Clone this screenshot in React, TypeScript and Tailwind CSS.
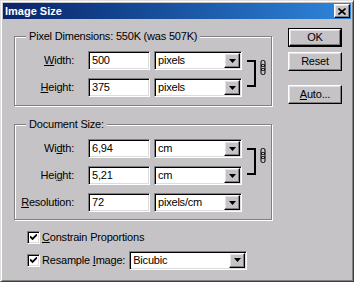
import type { ReactNode } from "react";

const sunken =
  "border border-t-[#808080] border-l-[#808080] border-b-white border-r-white shadow-[inset_1px_1px_0_#000,inset_-1px_-1px_0_#dcdcdc]";
const raised =
  "border border-t-white border-l-white border-b-black border-r-black shadow-[inset_-1px_-1px_0_#808080,inset_1px_1px_0_#e4e2e4]";
const etched =
  "border border-[#808080] shadow-[1px_1px_0_#fff,inset_1px_1px_0_#fff]";

function Arrow() {
  return (
    <svg width="7" height="4" viewBox="0 0 7 4">
      <path d="M0 0h7L3.5 4z" fill="#000" />
    </svg>
  );
}

function Combo({ value, className }: { value: string; className: string }) {
  return (
    <div className={`flex h-[19px] items-stretch bg-white p-[1px] ${sunken} ${className}`}>
      <span className="flex-1 pl-[2px] text-[11px] leading-[15px]">{value}</span>
      <span className={`flex w-[16px] items-center justify-center bg-[#c6c3c6] ${raised}`}>
        <Arrow />
      </span>
    </div>
  );
}

function Field({ label, value, unit }: { label: ReactNode; value: string; unit: string }) {
  return (
    <div className="flex h-[19px] items-center">
      <span className="w-[59px] text-right text-[11px]">{label}</span>
      <div className={`ml-[14px] h-[19px] w-[62px] bg-white px-[3px] text-[11px] leading-[16px] ${sunken}`}>
        {value}
      </div>
      <Combo value={unit} className="ml-[4px] w-[88px]" />
    </div>
  );
}

function Bracket({ top }: { top: string }) {
  return (
    <div className="ml-[5px] flex items-start">
      <div className={`${top} h-[27px] w-[9px] border-2 border-l-0 border-black`} />
      <svg className={`${top} ml-[4px] mt-[5px]`} width="6" height="15" viewBox="0 0 6 15">
        <rect x="1" y="0.5" width="4" height="6" rx="1.5" fill="none" stroke="#000" strokeWidth="1" />
        <rect x="1" y="4.5" width="4" height="6" rx="1.5" fill="none" stroke="#000" strokeWidth="1" />
        <rect x="1" y="8.5" width="4" height="6" rx="1.5" fill="none" stroke="#000" strokeWidth="1" />
      </svg>
    </div>
  );
}

function Check({ label }: { label: ReactNode }) {
  return (
    <div className="flex items-center">
      <span className={`flex h-[13px] w-[13px] items-center justify-center bg-white ${sunken}`}>
        <svg width="7" height="7" viewBox="0 0 7 7">
          <path d="M0 2.5l2.5 2.5L7 0.5" fill="none" stroke="#000" strokeWidth="1.8" />
        </svg>
      </span>
      <span className="ml-[2px] text-[11px]">{label}</span>
    </div>
  );
}

function Button({ children, isDefault }: { children: ReactNode; isDefault?: boolean }) {
  const inner = (
    <div className={`flex h-full w-full items-center justify-center bg-[#c6c3c6] text-[11px] ${raised}`}>
      {children}
    </div>
  );
  return (
    <div className={`h-[19px] w-[54px] ${isDefault ? "border border-black" : ""}`}>{inner}</div>
  );
}

export default function App() {
  return (
    <div className="flex h-[282px] w-[354px] flex-col border border-t-[#dfdfdf] border-l-[#dfdfdf] border-b-[#404040] border-r-[#404040] bg-[#c6c3c6] p-[2px] font-['Liberation_Sans',Arial,sans-serif] tracking-[-0.2px] text-black shadow-[inset_1px_1px_0_#fff,inset_-1px_-1px_0_#808080]">
      <div className="flex h-[16px] items-center justify-between bg-linear-to-r from-[#0a246a] to-[#2f86dc] pl-[2px] pr-[1px]">
        <span className="text-[11px] font-bold tracking-normal text-white">Image Size</span>
        <span className={`flex h-[14px] w-[16px] items-center justify-center bg-[#c6c3c6] ${raised}`}>
          <svg width="8" height="7" viewBox="0 0 8 7">
            <path d="M0.5 0.5l7 6M7.5 0.5l-7 6" stroke="#000" strokeWidth="1.6" />
          </svg>
        </span>
      </div>

      <div className="flex flex-1 pl-[11px]">
        <div className="flex w-[258px] flex-col">
          <div className={`relative mt-[17px] px-0 pt-[14px] pb-[8px] ${etched}`}>
            <span className="absolute left-[11px] top-[-8px] bg-[#c6c3c6] px-[3px] text-[11px] leading-[14px]">
              Pixel Dimensions: 550K (was 507K)
            </span>
            <div className="flex">
              <div className="flex flex-col gap-[8px]">
                <Field label={<><span className="underline">W</span>idth:</>} value="500" unit="pixels" />
                <Field label={<><span className="underline">H</span>eight:</>} value="375" unit="pixels" />
              </div>
              <Bracket top="mt-[9px]" />
            </div>
          </div>

          <div className={`relative mt-[18px] pt-[14px] pb-[7px] ${etched}`}>
            <span className="absolute left-[11px] top-[-8px] bg-[#c6c3c6] px-[3px] text-[11px] leading-[14px]">
              Document Size:
            </span>
            <div className="flex flex-col gap-[8px]">
              <div className="flex">
                <div className="flex flex-col gap-[8px]">
                  <Field label={<>Wi<span className="underline">d</span>th:</>} value="6,94" unit="cm" />
                  <Field label={<>Hei<span className="underline">g</span>ht:</>} value="5,21" unit="cm" />
                </div>
                <Bracket top="mt-[9px]" />
              </div>
              <Field label={<><span className="underline">R</span>esolution:</>} value="72" unit="pixels/cm" />
            </div>
          </div>

          <div className="mt-[9px] flex flex-col gap-[5px] pl-[13px]">
            <Check label={<><span className="underline">C</span>onstrain Proportions</>} />
            <div className="flex h-[19px] items-center">
              <Check label={<>Resample <span className="underline">I</span>mage:</>} />
              <Combo value="Bicubic" className="ml-[4px] w-[118px]" />
            </div>
          </div>
        </div>

        <div className="ml-[16px] flex flex-col pt-[9px]">
          <Button isDefault>OK</Button>
          <div className="mt-[5px]">
            <Button>Reset</Button>
          </div>
          <div className="mt-[14px]">
            <Button>
              <span className="underline">A</span>uto...
            </Button>
          </div>
        </div>
      </div>
    </div>
  );
}
